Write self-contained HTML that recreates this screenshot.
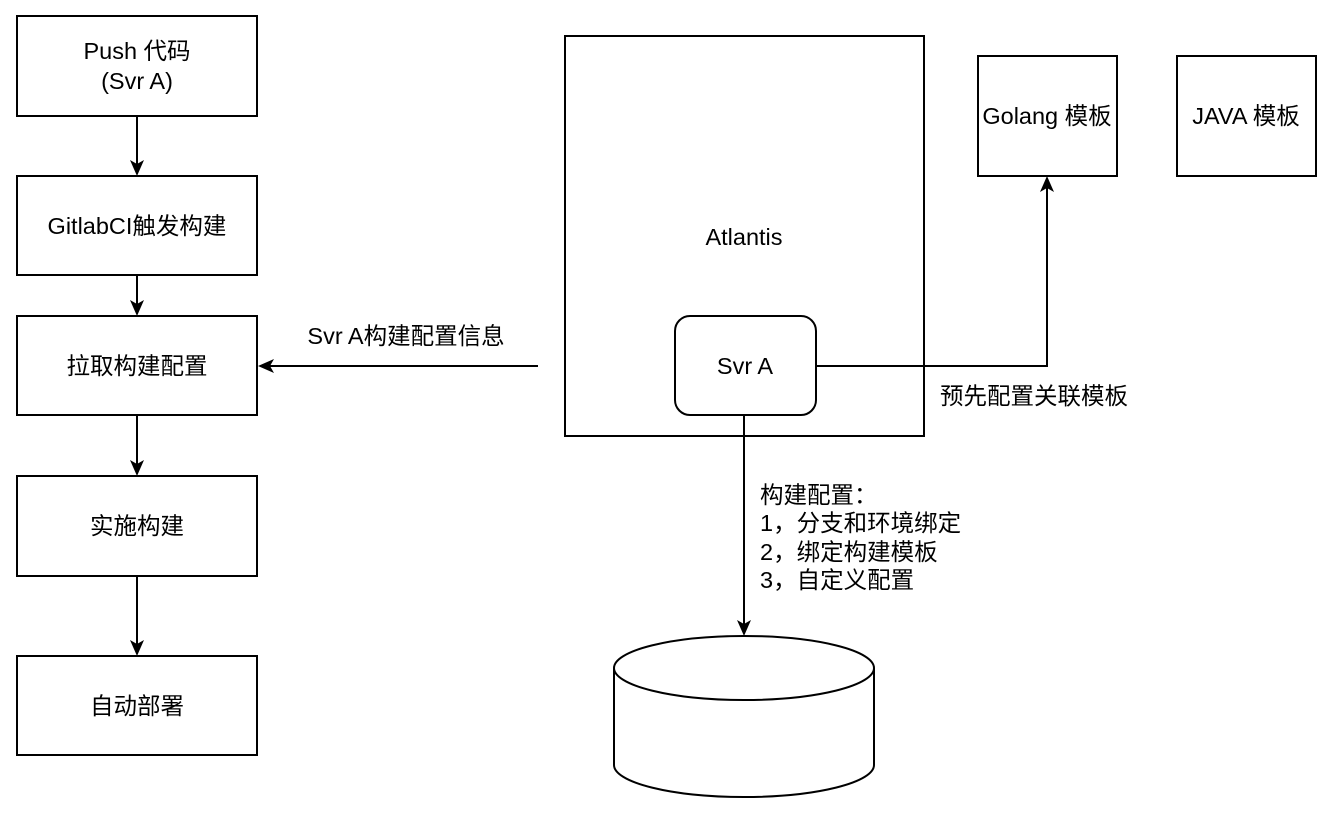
<!DOCTYPE html>
<html><head><meta charset="utf-8"><style>
html,body{margin:0;padding:0;background:#fff;}
svg{display:block;}
text{font-family:"Liberation Sans","Noto Sans CJK SC",sans-serif;font-size:23.5px;fill:#000;}
</style></head><body>
<svg width="1334" height="814" viewBox="0 0 1334 814" xmlns="http://www.w3.org/2000/svg">
<g fill="none" stroke="#000" stroke-width="2">
<rect x="17" y="16" width="240" height="100"/>
<rect x="17" y="176" width="240" height="99"/>
<rect x="17" y="316" width="240" height="99"/>
<rect x="17" y="476" width="240" height="100"/>
<rect x="17" y="656" width="240" height="99"/>
<rect x="565" y="36" width="359" height="400"/>
<rect x="675" y="316" width="141" height="99" rx="15"/>
<rect x="978" y="56" width="139" height="120"/>
<rect x="1177" y="56" width="139" height="120"/>
<path d="M614,668 A130,32 0 0 1 874,668 L874,765 A130,32 0 0 1 614,765 Z"/>
<path d="M614,668 A130,32 0 0 0 874,668"/>
</g>
<g stroke="#000" stroke-width="2" fill="none">
<path d="M137,116 V172"/><path d="M137,275 V312"/><path d="M137,415 V472"/><path d="M137,576 V652"/>
<path d="M538,366 H262"/>
<path d="M816,366 H1047 V180"/>
<path d="M744,415 V632"/>
</g>
<g fill="#000">
<path d="M137,176 l-7,-16 l7,4 l7,-4z"/>
<path d="M137,316 l-7,-16 l7,4 l7,-4z"/>
<path d="M137,476 l-7,-16 l7,4 l7,-4z"/>
<path d="M137,656 l-7,-16 l7,4 l7,-4z"/>
<path d="M258,366 l16,-7 l-4,7 l4,7z"/>
<path d="M1047,176 l-7,16 l7,-4 l7,4z"/>
<path d="M744,636 l-7,-16 l7,4 l7,-4z"/>
</g>
<g text-anchor="middle">
<text x="137" y="59">Push 代码</text>
<text x="137" y="89">(Svr A)</text>
<text x="137" y="234">GitlabCI触发构建</text>
<text x="137" y="374">拉取构建配置</text>
<text x="137" y="534">实施构建</text>
<text x="137" y="714">自动部署</text>
<text x="744" y="245">Atlantis</text>
<text x="745" y="374">Svr A</text>
<text x="1047" y="124">Golang 模板</text>
<text x="1246" y="124">JAVA 模板</text>
<text x="406" y="344">Svr A构建配置信息</text>
</g>
<text x="940" y="404">预先配置关联模板</text>
<text x="760" y="503">构建配置：</text>
<text x="760" y="531">1，分支和环境绑定</text>
<text x="760" y="560">2，绑定构建模板</text>
<text x="760" y="588">3，自定义配置</text>
</svg>
</body></html>
